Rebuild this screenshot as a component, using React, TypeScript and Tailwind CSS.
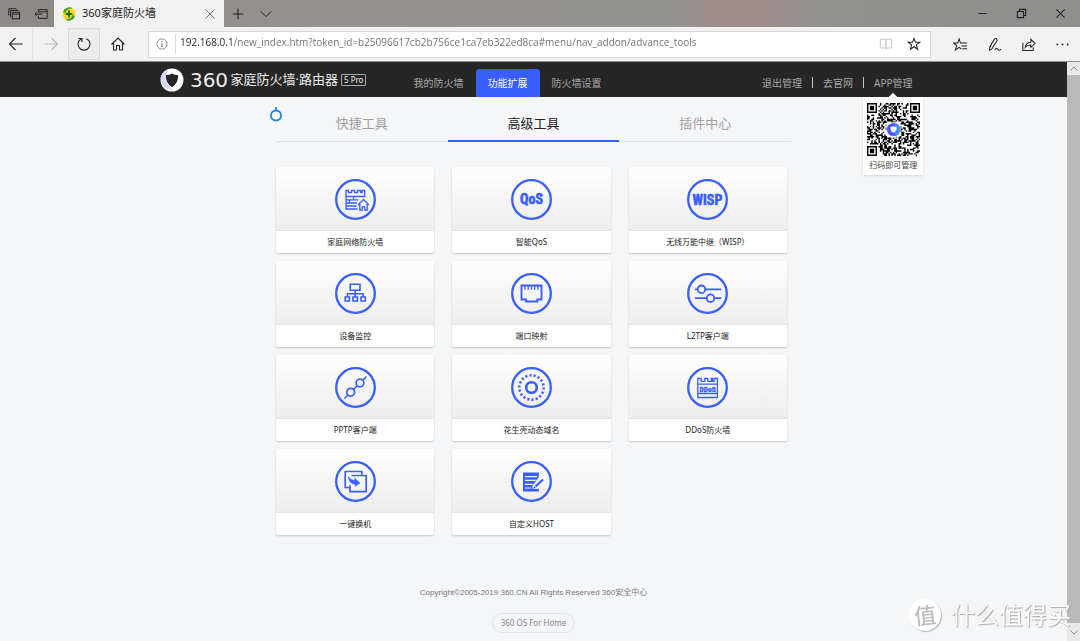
import { useState, type ReactNode } from "react";

const BLUE = "#385eff";

function Glyph({ children, className = "size-4", sw = 1.1 }: { children: ReactNode; className?: string; sw?: number }) {
  return (
    <svg viewBox="0 0 16 16" className={className} fill="none" stroke="currentColor" strokeWidth={sw} aria-hidden="true">
      {children}
    </svg>
  );
}

function IconButton({ label, className = "", children }: { label: string; className?: string; children: ReactNode }) {
  return (
    <button type="button" aria-label={label} className={`flex shrink-0 items-center justify-center ${className}`}>
      {children}
    </button>
  );
}

function TitleBar() {
  return (
    <div className="flex h-[27px] items-stretch bg-[linear-gradient(to_right,#8d8987,#95928f_30%,#949492_62%,#a08c8b_67%,#a08c8b_70%,#92918f_75%,#8f8f8d)] text-[#222]">
      <IconButton label="标签页列表" className="w-[27px]">
        <Glyph className="size-[14px]">
          <path d="M2 9.5V2h9M4 11.5V4h9" />
          <rect x="6" y="6" width="8.5" height="7.5" />
          <path d="M6 8h8.5" />
        </Glyph>
      </IconButton>
      <IconButton label="搁置标签页" className="w-[27px]">
        <Glyph className="size-[14px]">
          <path d="M5 6V3h10v10H5v-3M5 5.5h10M9.500 8H1M3 6L1 8l2 2" />
        </Glyph>
      </IconButton>
      <div className="flex w-[170px] items-center bg-[#f1f1f1] pl-2">
        <svg viewBox="0 0 14 14" className="size-[14px]" aria-hidden="true">
          <circle cx="7" cy="7" r="6.500" fill="#fddc17" />
          <path d="M1 5A6.500 6.500 0 0 1 11 1.600C8 1.300 4 2.500 3.500 6ZM13 9a6.500 6.500 0 0 1-10 3.400c3 .3 7-1 7.500-4.400Z" fill="#2fa12c" />
          <path d="M7 3.600v6.800M3.600 7h6.800" stroke="#0d6b16" strokeWidth="1.800" />
        </svg>
        <span className="ml-1.5 grow text-[11px] text-[#222]">360家庭防火墙</span>
        <IconButton label="关闭标签页" className="w-7 text-[#555]">
          <Glyph className="size-3">
            <path d="M2 2l12 12M14 2L2 14" />
          </Glyph>
        </IconButton>
      </div>
      <IconButton label="新建标签页" className="w-7">
        <Glyph className="size-3" sw={1.5}>
          <path d="M8 1v14M1 8h14" />
        </Glyph>
      </IconButton>
      <IconButton label="标签页预览" className="w-[27px]">
        <Glyph className="size-[14px]">
          <path d="M2 5l6 6 6-6" />
        </Glyph>
      </IconButton>
      <div className="grow" />
      <IconButton label="最小化" className="w-[39px]">
        <Glyph className="size-[11px]" sw={1.400}>
          <path d="M2 8h12" />
        </Glyph>
      </IconButton>
      <IconButton label="还原" className="w-[39px]">
        <Glyph className="size-[11px]" sw={1.600}>
          <path d="M2 5h9v9H2zM5 5V2h9v9h-3" />
        </Glyph>
      </IconButton>
      <IconButton label="关闭" className="w-[39px]">
        <Glyph className="size-[11px]" sw={1.500}>
          <path d="M2 2l12 12M14 2L2 14" />
        </Glyph>
      </IconButton>
    </div>
  );
}

function Toolbar() {
  const [url, setUrl] = useState("192.168.0.1/new_index.htm?token_id=b25096617cb2b756ce1ca7eb322ed8ca#menu/nav_addon/advance_tools");
  return (
    <div className="flex h-[35px] items-center border-b border-[#8b8f8c] bg-[#f1f1f1] text-[#222]">
      <IconButton label="后退" className="h-8 w-[33px] border-r border-[#e2e2e2]">
        <Glyph>
          <path d="M14.500 8h-13M7.500 2L1.500 8l6 6" />
        </Glyph>
      </IconButton>
      <IconButton label="前进" className="h-8 w-[35px] text-[#b5b5b5]">
        <Glyph>
          <path d="M1.500 8h13M8.500 2l6 6-6 6" />
        </Glyph>
      </IconButton>
      <IconButton label="刷新" className="h-8 w-8 border border-[#dadada] bg-[#ececec]">
        <Glyph>
          <path d="M5.500 2.700A6 6 0 1 0 10.500 2.700M2.500 2.500h3.500v3.500" />
        </Glyph>
      </IconButton>
      <IconButton label="主页" className="h-8 w-9">
        <Glyph>
          <path d="M1.500 8.500L8 2l6.500 6.500M3.500 7v7H6.500V9.500h3V14h3V7" />
        </Glyph>
      </IconButton>
      <div className="ml-3 mr-3 flex h-[27px] min-w-0 grow items-center border border-[#d6d6d6] bg-white">
        <IconButton label="网站信息" className="w-[26px] text-[#777]">
          <Glyph className="size-3">
            <circle cx="8" cy="8" r="6.800" />
            <path d="M8 7v5M8 4v1.500" strokeWidth="1.500" />
          </Glyph>
        </IconButton>
        <span className="h-5 w-px bg-[#dcdcdc]" />
        <input
          aria-label="地址栏"
          value={url}
          onChange={(e) => setUrl(e.target.value)}
          className="ml-1 min-w-0 grow bg-[linear-gradient(to_right,#222_53px,#6c6c6c_53px)] bg-clip-text pb-[3px] font-['Open_Sans','Noto_Sans',sans-serif] text-[10px] text-transparent outline-none"
        />
        <IconButton label="阅读视图" className="w-7 text-[#c4c4c4]">
          <Glyph className="size-[14px]">
            <path d="M1.500 2.500h4.500q2 0 2 1v10q0-1-2-1H1.500zM14.500 2.500H10q-2 0-2 1v10q0-1 2-1h4.500z" />
          </Glyph>
        </IconButton>
        <IconButton label="收藏此页" className="mr-[2px] w-7">
          <Glyph className="size-[14px]" sw={1.200}>
            <path d="M8 1.500l1.700 4.600h4.800l-3.800 3 1.400 4.800L8 11.100l-4.100 2.800 1.400-4.800-3.800-3h4.800z" />
          </Glyph>
        </IconButton>
      </div>
      <div className="flex">
        <IconButton label="收藏夹" className="w-[34px]">
          <Glyph className="size-[15px]">
            <path d="M9 13l-2.500-2-4 2.800 1.400-4.700L.8 6.500h4.300L6.500 2l1.500 4.500h7M9 9.500h6M10 12.500h5" />
          </Glyph>
        </IconButton>
        <IconButton label="添加笔记" className="w-[34px]">
          <Glyph className="size-[15px]">
            <path d="M2.500 14.500l.5-4L8 2q1.500-1 2.500.5T10 5L5 13l-2.500 1.500M8.500 14c1-2.500 2-2.500 3-1s2 1.500 3.500 0M5 6.500L3.500 11" />
          </Glyph>
        </IconButton>
        <IconButton label="共享" className="w-[34px]">
          <Glyph className="size-[15px]">
            <path d="M2 6v8.500h11V11M4.500 11c.5-4 2.500-5.500 6-5.500V2.500L15 7l-4.500 4V8.500C8 8.500 6 9 4.500 11z" />
          </Glyph>
        </IconButton>
        <IconButton label="设置及其他" className="w-[35px]">
          <svg viewBox="0 0 16 16" className="size-[15px]" fill="currentColor" aria-hidden="true">
            <circle cx="2.500" cy="8" r="1" />
            <circle cx="8" cy="8" r="1" />
            <circle cx="13.500" cy="8" r="1" />
          </svg>
        </IconButton>
      </div>
    </div>
  );
}

const QR = 37;

function isDark(x: number, y: number): boolean {
  for (const [ox, oy] of [[0, 0], [QR - 7, 0], [0, QR - 7]]) {
    const dx = x - ox;
    const dy = y - oy;
    if (dx >= -1 && dx <= 7 && dy >= -1 && dy <= 7) {
      const d = Math.max(Math.abs(dx - 3), Math.abs(dy - 3));
      return d === 3 || d <= 1;
    }
  }
  let h = (x * 374761393 + y * 668265263) | 0;
  h = Math.imul(h ^ (h >>> 13), 1274126177);
  return ((h ^ (h >>> 16)) & 255) < 132;
}

const qrPath = Array.from({ length: QR * QR }, (_, i) => [i % QR, Math.floor(i / QR)])
  .filter(([x, y]) => isDark(x, y))
  .map(([x, y]) => `M${x} ${y}h1v1h-1z`)
  .join("");

function QrPopover() {
  return (
    <div className="absolute left-1/2 top-full z-10 flex w-[60px] -translate-x-1/2 flex-col items-center bg-white pb-1 pt-[6px] shadow-sm">
      <span className="absolute -top-[3px] left-1/2 size-[6px] -translate-x-1/2 rotate-45 bg-white" />
      <svg viewBox="0 0 37 37" className="relative size-[53px]" role="img" aria-label="APP下载二维码">
        <path d={qrPath} fill="#000" />
        <rect x="13.500" y="13.500" width="10" height="10" rx="1" fill="#fff" />
        <circle cx="18.500" cy="18.500" r="4.600" fill="#4a58fb" />
        <path d="M19.500 14.010a4.600 4.600 0 0 1 0 8.980z" fill="#3f8eff" />
        <path d="M18.500 16.300l2.200.6q.2 2.800-2.200 3.900-2.400-1.100-2.200-3.900z" fill="#fff" />
      </svg>
      <span className="mt-[3px] whitespace-nowrap text-[8px] leading-[12px] text-[#444]">扫码即可管理</span>
    </div>
  );
}

function AppHeader() {
  return (
    <header className="bg-[#262626]">
      <div className="mx-auto flex h-[35px] max-w-[758px] items-stretch pl-[5px] text-[10px] text-[#a6a6a6]">
        <a href="#home" className="flex w-[242px] items-center text-[#ececec]">
          <svg viewBox="0 0 24 24" className="size-6" aria-hidden="true">
            <circle cx="12" cy="12" r="11.500" fill="#fff" />
            <path d="M1 9a11.500 11.500 0 0 1 8-8q-4 4-3 10t6 11A11.500 11.500 0 0 1 1 9z" fill="#d3d7f8" />
            <path d="M12 5.500q3 1.600 6 1.500.6 8-6 12.200Q5.400 15 6 7q3 .1 6-1.500z" fill="#262626" />
          </svg>
          <span className="ml-1 w-[43px] text-center font-['DejaVu_Sans',sans-serif] text-[20px] leading-none">360</span>
          <span className="whitespace-nowrap text-[13px]">家庭防火墙·路由器</span>
          <span className="ml-[3px] whitespace-nowrap rounded-[1px] border border-[#a8a8a8] px-[2px] text-[8px] leading-[10px]">5 Pro</span>
        </a>
        <nav className="flex items-end leading-[28px]">
          <a href="#home" className="px-3">我的防火墙</a>
          <a href="#addon" className="rounded-t-[3px] bg-[#385eff] px-3 text-white">功能扩展</a>
          <a href="#settings" className="px-3">防火墙设置</a>
        </nav>
        <div className="ml-auto flex items-end leading-[28px]">
          <a href="#logout">退出管理</a>
          <span className="mx-[10px] mb-[9px] h-[11px] w-px bg-[#c4c4c4]" />
          <a href="#site">去官网</a>
          <span className="mx-[10px] mb-[9px] h-[11px] w-px bg-[#c4c4c4]" />
          <div className="relative">
            <a href="#app">APP管理</a>
            <QrPopover />
          </div>
        </div>
      </div>
    </header>
  );
}

const impact = "font-['Liberation_Sans_Narrow','Roboto_Condensed','DejaVu_Sans_Condensed',sans-serif] font-bold";

const icons: Record<string, ReactNode> = {
  firewall: (
    <g strokeWidth="1.300">
      <path d="M22.500 30H11V11.500h2.500v2h3v-2h3v2h3v-2h3v2h1.500v-2h2.700v6H11M11 20.800h12.500M11 24h11M11 27h10.500M18.500 17.500v3.300M14.500 20.800V24" />
      <path d="M23 26l5.500-5.500L34 26M24.800 25v6h2.400v-3.200h2.600V31h2.400v-6" />
    </g>
  ),
  qos: (
    <text x="20.500" y="25" textAnchor="middle" fontSize="14" fill={BLUE} strokeWidth="0.600" className={impact}>QoS</text>
  ),
  wisp: (
    <text x="20.500" y="26" textAnchor="middle" fontSize="14" fill={BLUE} strokeWidth="0.600" className={impact}>WISP</text>
  ),
  monitor: (
    <path strokeWidth="1.600" d="M15.200 11.200h9.800v6h-9.800zM20.200 17.200v6.600M12.500 23.800v-3h15.600v3M10.200 24h4.200v4h-4.200zM18 24h4.400v4H18zM26 24h4.300v4H26z" />
  ),
  port: (
    <>
      <path strokeWidth="1.900" d="M10.500 12.500h20V26.500h-4.200v2H15v-2h-4.500z" />
      <path strokeWidth="1.300" d="M14 12.500v4.300M17.200 12.500v4.300M20.500 12.500v4.300M23.700 12.500v4.300M27 12.500v4.300" />
    </>
  ),
  l2tp: (
    <g strokeWidth="1.800" strokeLinecap="round">
      <path d="M8.500 16.300h2M18.500 16.300h15M8.500 25.200h11M27.500 25.200h6" />
      <circle cx="14.500" cy="16.300" r="3.800" />
      <circle cx="23.500" cy="25.200" r="3.800" />
    </g>
  ),
  pptp: (
    <g strokeWidth="1.700" strokeLinecap="round">
      <path d="M10 31l3-3M18.500 22.500l3.500-3.500M28 13l3-3" />
      <circle cx="15.700" cy="25.200" r="3.900" />
      <circle cx="25" cy="16" r="3.900" />
    </g>
  ),
  ddns: (
    <>
      <circle cx="20.500" cy="20.500" r="5.300" strokeWidth="2.600" />
      <circle cx="20.500" cy="20.500" r="12.200" strokeWidth="2.500" pathLength="90" strokeDasharray="2.500 2.500" />
    </>
  ),
  ddos: (
    <>
      <path strokeWidth="1.300" d="M10.800 30.500V11.500h3.400v2.800h3.600v-2.800h3v2.800h3.600v-2.800h1.200v2.800h1.600v-2.800h3.200v19zM10.800 17.200h19.600M10.800 26.500h19.600" />
      <text x="20.600" y="24.600" textAnchor="middle" fontSize="7.500" fill={BLUE} strokeWidth="0.400" className={impact}>DDoS</text>
    </>
  ),
  swap: (
    <>
      <path strokeWidth="1.700" d="M14 26.500h-3.800V10.500h16.600v3M16.500 14.500h14.700v16.200H15v-6.500" />
      <path d="M13.200 15.500q2.300 4 6.800 4l-.6-2.400 5.600 5-4.700 3.200-.2-2.100q-5.900-.2-6.900-7.700z" fill={BLUE} strokeWidth="0.500" />
    </>
  ),
  host: (
    <>
      <path d="M12 11.500h15.800v4.800l-6.300 8.200v3.500h5.500l.8-1v3.500H12z" fill={BLUE} stroke="none" />
      <path d="M14 15.600h12M14 19.400h10.500M14 23.400h7.500M14 27h6" stroke="#f5f5f5" strokeWidth="1.100" />
      <path d="M24.500 25.500l7.500-7" strokeWidth="2.200" />
      <path d="M22.500 27.700l.7-2.500 1.700 1.700z" fill={BLUE} stroke="none" />
    </>
  ),
};

const tools = [
  { icon: "firewall", name: "家庭网络防火墙" },
  { icon: "qos", name: "智能QoS" },
  { icon: "wisp", name: "无线万能中继（WISP）" },
  { icon: "monitor", name: "设备监控" },
  { icon: "port", name: "端口映射" },
  { icon: "l2tp", name: "L2TP客户端" },
  { icon: "pptp", name: "PPTP客户端" },
  { icon: "ddns", name: "花生壳动态域名" },
  { icon: "ddos", name: "DDoS防火墙" },
  { icon: "swap", name: "一键换机" },
  { icon: "host", name: "自定义HOST" },
];

function ToolCard({ icon, name }: { icon: string; name: string }) {
  return (
    <a href={`#${icon}`} className="block overflow-hidden rounded-[2px] bg-white shadow-[0_1px_2px_rgba(0,0,0,0.2)]">
      <span className="flex h-16 items-center justify-center border-b border-[#e4e4e4] bg-linear-to-b from-[#fefefe] to-[#ededed] pt-[2px]">
        <svg viewBox="0 0 41 41" className="size-[41px]" fill="none" stroke={BLUE} aria-hidden="true">
          <circle cx="20.500" cy="20.500" r="19.300" strokeWidth="2.300" />
          {icons[icon]}
        </svg>
      </span>
      <span className="block text-center text-[8px] leading-[22px] text-[#222]">{name}</span>
    </a>
  );
}

const tabs = ["快捷工具", "高级工具", "插件中心"];

function Tabs() {
  return (
    <div role="tablist" className="grid h-[45px] grid-cols-3 border-b border-[#dfe1e3]">
      {tabs.map((t, i) => (
        <button
          key={t}
          type="button"
          role="tab"
          aria-selected={i === 1}
          className={
            i === 1
              ? "-mb-px border-b-2 border-[#385eff] pb-[3px] pt-3 text-[13px] leading-none text-[#222]"
              : "pb-1 pt-3 text-[13px] leading-none text-[#a0a0a0]"
          }
        >
          {t}
        </button>
      ))}
    </div>
  );
}

function Scrollbar() {
  return (
    <div className="flex w-[13px] shrink-0 flex-col bg-[#b9b9b9] text-[#8a8a8a]">
      <IconButton label="向上滚动" className="h-[13px] bg-[#e9e9e9]">
        <Glyph className="size-2" sw={2}>
          <path d="M1 11l7-7 7 7" />
        </Glyph>
      </IconButton>
      <div className="grow" />
      <IconButton label="向下滚动" className="h-[18px] bg-[#e9e9e9]">
        <Glyph className="size-2" sw={2}>
          <path d="M1 5l7 7 7-7" />
        </Glyph>
      </IconButton>
    </div>
  );
}

function Watermark() {
  return (
    <div className="pointer-events-none fixed bottom-[10px] right-[9px] flex items-center gap-[10px] text-white">
      <span className="flex size-8 items-center justify-center rounded-full bg-white text-[22px] font-medium leading-none text-[#bdbdbd] shadow-[1px_1px_1px_#b5b5b5]">
        <span className="-rotate-6">值</span>
      </span>
      <span className="text-[24px] leading-[32px] [text-shadow:1px_1px_1px_#a8a8a8,0_0_1px_#c4c4c4]">什么值得买</span>
    </div>
  );
}

export default function App() {
  return (
    <div className="flex min-h-screen flex-col bg-[#f4f6f8] font-['Noto_Sans','Noto_Sans_CJK_SC',sans-serif]">
      <TitleBar />
      <Toolbar />
      <div className="flex grow">
        <div className="min-w-0 grow">
          <AppHeader />
          <main className="relative mx-auto max-w-[515px]">
            <svg viewBox="0 0 14 16" className="absolute -left-[7px] top-[9px] h-4 w-[14px]" fill="none" stroke="#1a86d9" strokeWidth="1.800" aria-hidden="true">
              <circle cx="7" cy="9.500" r="5" />
              <path d="M7 1v4" />
            </svg>
            <Tabs />
            <div className="mr-1 mt-[25px] grid grid-cols-3 gap-x-[18px] gap-y-2">
              {tools.map((t) => (
                <ToolCard key={t.icon} {...t} />
              ))}
            </div>
          </main>
          <footer className="flex flex-col items-center text-[#858585]">
            <p className="mt-[52px] font-['Liberation_Sans','Noto_Sans_CJK_SC',sans-serif] text-[8px] leading-[12px] text-[#777]">
              Copyright©2005-2019 360.CN All Rights Reserved 360安全中心
            </p>
            <a href="#os" className="mt-[14px] rounded-full border border-[#e0e2e4] px-2 text-[8px] leading-[18px]">
              360 OS For Home
            </a>
          </footer>
        </div>
        <Scrollbar />
      </div>
      <Watermark />
    </div>
  );
}
